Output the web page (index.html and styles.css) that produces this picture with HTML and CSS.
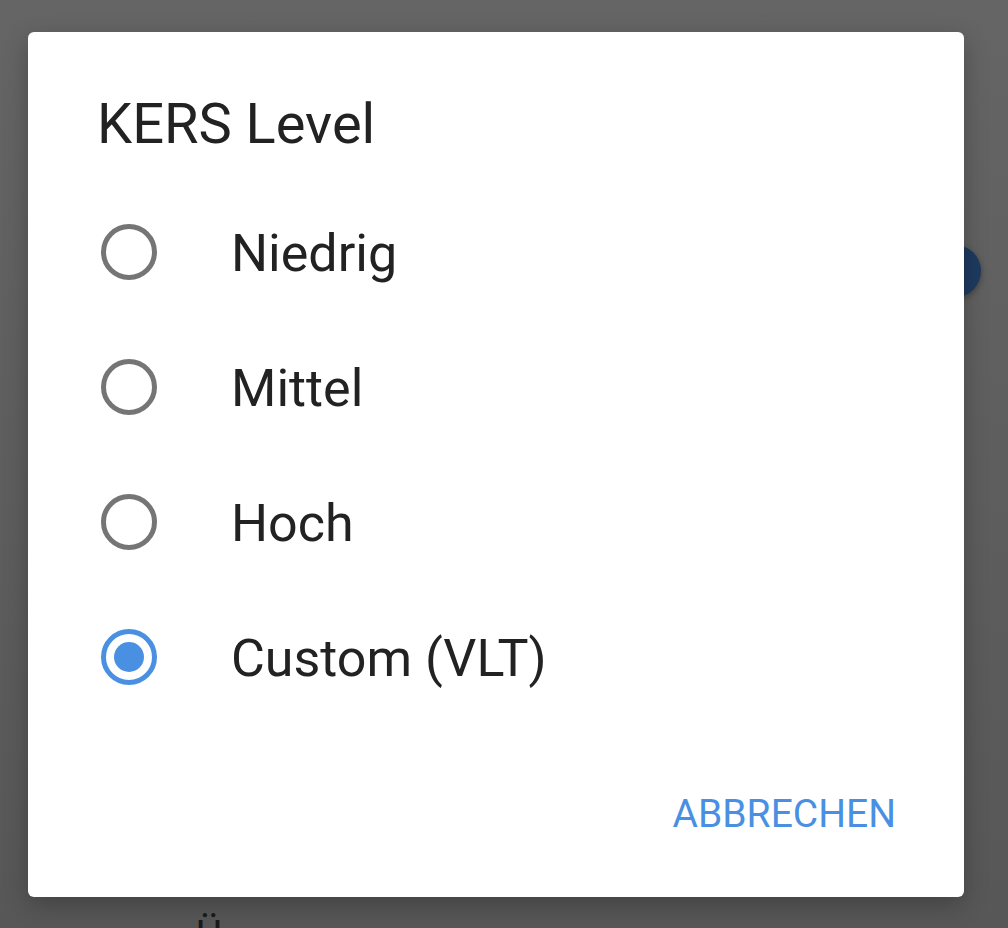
FILE: index.html
```html
<!DOCTYPE html>
<html lang="de">
<head>
<meta charset="utf-8">
<title>KERS Level</title>
<link rel="stylesheet" href="styles.css">
</head>
<body>
<div class="backdrop">
  <div class="fab"></div>
  <div class="under-text">Ü</div>
  <div class="dialog">
    <h1 class="title">KERS Level</h1>
    <div class="options">
      <label class="option">
        <span class="radio"></span>
        <span class="label">Niedrig</span>
      </label>
      <label class="option">
        <span class="radio"></span>
        <span class="label">Mittel</span>
      </label>
      <label class="option">
        <span class="radio"></span>
        <span class="label">Hoch</span>
      </label>
      <label class="option">
        <span class="radio checked"></span>
        <span class="label">Custom (VLT)</span>
      </label>
    </div>
    <div class="actions">
      <span class="button">ABBRECHEN</span>
    </div>
  </div>
</div>
</body>
</html>
```
FILE: styles.css
```css
html, body {
  margin: 0;
  padding: 0;
}
body {
  width: 1008px;
  height: 928px;
  overflow: hidden;
  font-family: Roboto, "Noto Sans", sans-serif;
}
.backdrop {
  position: relative;
  width: 1008px;
  height: 928px;
  box-sizing: border-box;
  padding: 32px 44px 0 28px;
  background: linear-gradient(#656565, #5e5e5e 50%, #575757);
}
.fab {
  position: absolute;
  left: 929px;
  top: 245px;
  width: 52px;
  height: 52px;
  border-radius: 50%;
  background: #1d3a5e;
  box-shadow: 0 2px 6px rgba(0,0,0,0.35);
}
.under-text {
  position: absolute;
  left: 196px;
  top: 912px;
  font-size: 40px;
  line-height: 48px;
  color: #1a1a1a;
}
.dialog {
  position: relative;
  width: 936px;
  height: 865px;
  box-sizing: border-box;
  background: #ffffff;
  border-radius: 6px;
  padding: 59px 68px 59px 69px;
  display: flex;
  flex-direction: column;
  box-shadow: 0 8px 24px rgba(0,0,0,0.25);
}
.title {
  margin: 0;
  font-weight: 400;
  font-size: 56px;
  line-height: 66px;
  color: #222222;
}
.options {
  margin-top: 27px;
  display: flex;
  flex-direction: column;
}
.option {
  height: 135px;
  display: flex;
  align-items: center;
  margin-left: 4px;
}
.radio {
  width: 56px;
  height: 56px;
  box-sizing: border-box;
  border: 5px solid #757575;
  border-radius: 50%;
  display: flex;
  align-items: center;
  justify-content: center;
  flex: none;
}
.radio.checked {
  border-color: #4a90e2;
}
.radio.checked::after {
  content: "";
  width: 30px;
  height: 30px;
  border-radius: 50%;
  background: #4a90e2;
}
.label {
  margin-left: 74px;
  padding-top: 4px;
  font-size: 52px;
  color: #222222;
}
.actions {
  margin-top: auto;
  display: flex;
  justify-content: flex-end;
}
.button {
  font-size: 39px;
  line-height: 48px;
  color: #4a90e2;
}
```
